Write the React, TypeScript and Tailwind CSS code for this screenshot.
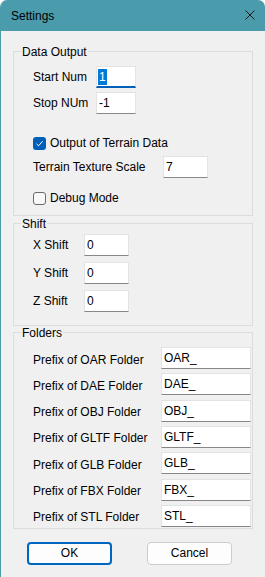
import React from "react";

type TextBoxProps = {
    value: string;
    width: string;
    focused?: boolean;
};

const TextBox = ({ value, width, focused }: TextBoxProps) => (
    <div
        className={`${width} h-[22px] flex items-center bg-white pl-px border border-[#e3e3e3] ${
            focused ? "border-b-2 border-b-[#005fb8]" : "border-b-[#868686]"
        }`}
    >
        {focused ? (
            <span className="inline-block h-[16px] leading-[16px] px-px bg-[#0078d7] text-white">{value}</span>
        ) : (
            <span className="pl-px">{value}</span>
        )}
    </div>
);

const CheckBox = ({ checked, label }: { checked?: boolean; label: string }) => (
    <div className="h-[22px] flex items-center gap-[4px]">
        {checked ? (
            <span className="w-[13px] h-[13px] rounded-[3px] bg-[#005fb8] flex items-center justify-center">
                <svg width="9" height="9" viewBox="0 0 9 9">
                    <path d="M1.5 4.8 L3.6 6.8 L7.6 2.2" fill="none" stroke="white" strokeWidth="1" />
                </svg>
            </span>
        ) : (
            <span className="w-[13px] h-[13px] rounded-[3px] border border-[#6a6a6a] bg-[#f8f8f8]" />
        )}
        <span>{label}</span>
    </div>
);

const GroupBox = ({ title, className, children }: { title: string; className?: string; children: React.ReactNode }) => (
    <fieldset className={`w-[240px] border border-[#dcdcdc] ${className ?? ""}`}>
        <legend className="ml-[7px] px-px pt-[2px] leading-[12px]">{title}</legend>
        {children}
    </fieldset>
);

const Row = ({ label, labelWidth, children, className }: { label: string; labelWidth: string; children: React.ReactNode; className?: string }) => (
    <div className={`h-[22px] flex items-center ${className ?? ""}`}>
        <span className={labelWidth}>{label}</span>
        {children}
    </div>
);

const folders = ["OAR", "DAE", "OBJ", "GLTF", "GLB", "FBX", "STL"];

export default function App() {
    return (
        <div className="w-[265px] h-[577px] flex flex-col bg-[#f0f0f0] border-l border-[#4a9bab] rounded-tl-[7px] rounded-tr-[7px] overflow-hidden font-['Liberation_Sans',Arial,sans-serif] text-[12px] text-black">
            {/* title bar */}
            <div className="h-[31px] shrink-0 flex items-center justify-between pl-[10px] pr-[10px] bg-[#4a9bab]">
                <span>Settings</span>
                <svg width="10" height="10" viewBox="0 0 10 10" className="mb-[2px]">
                    <path d="M0.5 0.5 L9.5 9.5 M9.5 0.5 L0.5 9.5" stroke="#1a1a1a" strokeWidth="1" />
                </svg>
            </div>

            <div className="flex flex-col pl-[12px] pt-[13px]">
                <GroupBox title="Data Output">
                    <div className="flex flex-col pl-[19px] pt-[8px] pb-[6px]">
                        <Row label="Start Num" labelWidth="w-[63px]">
                            <TextBox value="1" width="w-[40px]" focused />
                        </Row>
                        <Row label="Stop NUm" labelWidth="w-[63px]" className="mt-[4px]">
                            <TextBox value="-1" width="w-[40px]" />
                        </Row>
                        <div className="mt-[18px]">
                            <CheckBox checked label="Output of Terrain Data" />
                        </div>
                        <Row label="Terrain Texture Scale" labelWidth="w-[130px]" className="mt-[2px]">
                            <TextBox value="7" width="w-[45px]" />
                        </Row>
                        <div className="mt-[9px]">
                            <CheckBox label="Debug Mode" />
                        </div>
                    </div>
                </GroupBox>

                <GroupBox title="Shift">
                    <div className="flex flex-col gap-[6px] pl-[19px] pt-[4px] pb-[13px]">
                        {["X", "Y", "Z"].map((axis) => (
                            <Row key={axis} label={`${axis} Shift`} labelWidth="w-[51px]">
                                <TextBox value="0" width="w-[45px]" />
                            </Row>
                        ))}
                    </div>
                </GroupBox>

                <GroupBox title="Folders" className="-mt-px">
                    <div className="flex flex-col gap-[4.33px] pl-[19px] pt-[8px] pb-px">
                        {folders.map((name) => (
                            <div key={name} className="h-[22px] flex items-center">
                                <span className="w-[128px] pt-[3px]">{`Prefix of ${name} Folder`}</span>
                                <TextBox value={`${name}_`} width="w-[90px]" />
                            </div>
                        ))}
                    </div>
                </GroupBox>

                <div className="flex gap-[35px] pl-[14px] mt-[13px]">
                    <button className="w-[85px] h-[23px] rounded-[4px] border-2 border-[#0067c0] bg-[#fdfdfd] flex items-center justify-center">
                        OK
                    </button>
                    <button className="w-[85px] h-[23px] rounded-[4px] border border-[#cccccc] bg-[#fdfdfd] flex items-center justify-center">
                        Cancel
                    </button>
                </div>
            </div>
        </div>
    );
}
